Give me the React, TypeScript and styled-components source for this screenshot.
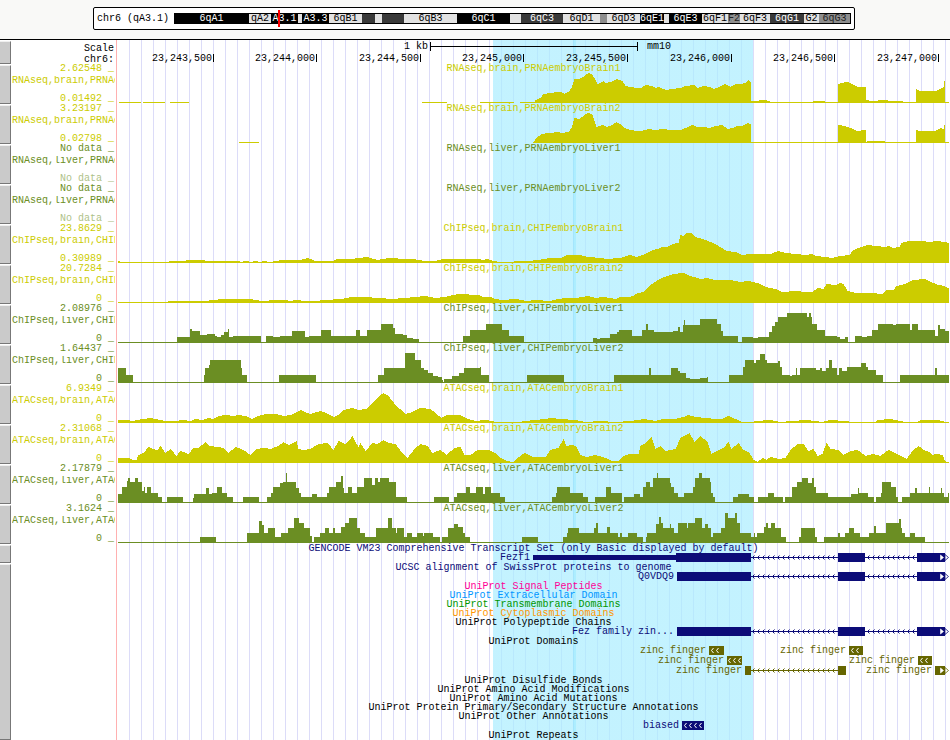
import React from "react";
import styled, { createGlobalStyle } from "styled-components";

const YELLOW = "#cccc00";
const GREEN = "#6b8e23";
const NAVY = "#0c0c78";
const OLIVE = "#666600";

const GlobalStyle = createGlobalStyle`
  * { box-sizing: border-box; }
  body {
    margin: 0;
    background: #fff;
    color: #000;
    font-family: "Liberation Mono", "Courier New", monospace;
    font-size: 10px;
    line-height: 9px;
  }
`;

/* The drawing area spans these horizontal units; everything in it scales with the window. */
const VIEW_START = 117;
const VIEW_WIDTH = 833;
const pct = (x: number) => `${((x - VIEW_START) / VIEW_WIDTH) * 100}%`;
const span = (a: number, b: number) => `${((b - a) / VIEW_WIDTH) * 100}%`;

/* ---------- chromosome ideogram ---------- */

const Header = styled.header`
  height: 40px;
  padding: 7px 95px 0 93px;
  background: #f9f9f7;
  border-bottom: 1px solid #000;
`;

const Ideogram = styled.div`
  display: flex;
  align-items: center;
  gap: 5px;
  height: 23px;
  padding: 0 3px;
  background: #fff;
  border: 1px solid #000;
  border-radius: 2px;
`;

const Position = styled.span`
  flex: none;
  white-space: pre;
`;

const Bands = styled.div`
  position: relative;
  flex: 1;
  display: flex;
  height: 11px;
  border: solid #000;
  border-width: 1px 1px 1px 0;
`;

const Band = styled.span<{ $size: number; $fill: string; $ink: string }>`
  flex: ${(p) => p.$size} 1 0;
  min-width: 0;
  display: flex;
  justify-content: center;
  background: ${(p) => p.$fill};
  color: ${(p) => p.$ink};
  white-space: nowrap;
`;

const Marker = styled.span`
  position: absolute;
  top: -4px;
  bottom: -4px;
  left: 15.4%;
  width: 2px;
  background: #f00;
`;

const SHADES: Record<string, [string, string]> = {
  k: ["#000", "#fff"],
  d: ["#393939", "#fff"],
  g: ["#8e8e8e", "#222"],
  l: ["#e2e2e2", "#000"],
};

const BANDS: [number, string, string][] = [
  [75, "k", "6qA1"], [22, "l", "qA2"], [27, "k", "A3.1"], [4, "l", ""],
  [27, "k", "A3.3"], [33, "l", "6qB1"], [13, "d", ""], [7, "l", ""],
  [22, "d", ""], [53, "l", "6qB3"], [53, "k", "6qC1"], [11, "l", ""],
  [42, "d", "6qC3"], [37, "l", "6qD1"], [7, "g", ""], [33, "l", "6qD3"],
  [24, "k", "6qE1"], [5, "l", ""], [33, "k", "6qE3"], [26, "l", "6qF1"],
  [12, "g", "F2"], [30, "l", "6qF3"], [34, "d", "6qG1"], [15, "l", "G2"],
  [31, "g", "6qG3"],
];

/* ---------- track layout ---------- */

const Track = styled.section`
  display: grid;
  grid-template-columns: 11px 106px minmax(0, 1fr);
`;

const Handle = styled.button`
  margin: 1px 0 0;
  padding: 0;
  background: #cacaca;
  border: solid;
  border-width: 1px 1px 1px 0;
  border-color: #efefef #777 #777 #efefef;
  border-radius: 0;
  cursor: ew-resize;
`;

const Labels = styled.div<{ $color?: string }>`
  display: flex;
  flex-direction: column;
  min-width: 0;
  padding-right: 3px;
  color: ${(p) => p.$color ?? "#000"};
  text-align: right;
  white-space: pre;
`;

const RulerLabels = styled(Labels)`
  height: 24px;
  padding-top: 3px;
  line-height: 11px;
`;

const TrackName = styled.span`
  margin: 3px -1px 9px 1px;
  overflow: hidden;
  text-align: left;
`;

const Limit = styled.span<{ $faint?: boolean }>`
  opacity: ${(p) => (p.$faint ? 0.55 : 1)};
`;

const Plot = styled.div`
  min-width: 0;
  box-shadow: -1px 0 0 #ffb0b0;
  background-image:
    linear-gradient(#fff, #fff),
    linear-gradient(
      to right,
      transparent 45.14%,
      rgba(170, 237, 255, 0.7) 45.14%,
      rgba(170, 237, 255, 0.7) 54.8%,
      rgba(145, 232, 255, 0.75) 54.8%,
      rgba(145, 232, 255, 0.75) 55.1%,
      rgba(170, 237, 255, 0.7) 55.1%,
      rgba(170, 237, 255, 0.7) 76.35%,
      transparent 76.35%
    ),
    repeating-linear-gradient(to right, #dcdcf8 0 1px, transparent 1px 12px);
  background-size: 1px 100%, auto, auto;
  background-repeat: no-repeat, no-repeat, repeat;
`;

const Title = styled.h2<{ $color?: string }>`
  margin: 0;
  height: 9px;
  font-size: 10px;
  font-weight: 400;
  text-align: center;
  white-space: nowrap;
  color: ${(p) => p.$color ?? "#000"};
`;

const Canvas = styled.svg<{ $height: number; $after?: number }>`
  display: block;
  width: 100%;
  height: ${(p) => p.$height}px;
  margin-bottom: ${(p) => p.$after ?? 0}px;
  shape-rendering: crispEdges;
`;

/* ---------- signal graphs ---------- */

type Signal = {
  name: string;
  title: string;
  color: string;
  max: string;
  min: string;
  step?: boolean;
  extra?: [number, number][];
  data?: string;
};

/* Each entry of the data is position:height; smooth graphs are interpolated, stepped ones hold. */
function areaPath(data: string, step?: boolean) {
  const pts = data.trim().split(/\s+/).map((p) => p.split(":").map(Number));
  let d = `M${pts[0][0]} 30`;
  let i = 0;
  for (let x = pts[0][0]; x < 949; x++) {
    while (i < pts.length - 1 && pts[i + 1][0] <= x) i++;
    const [x0, h0] = pts[i];
    const next = pts[i + 1];
    const h = step || !next ? h0 : Math.round(h0 + ((next[1] - h0) * (x - x0)) / (next[0] - x0));
    d += `V${30 - h}H${x + 1}`;
  }
  return d + "V30Z";
}

const SIGNALS: Signal[] = [
  {
    name: "RNAseq,brain,PRNAembryoBrain1", title: "RNAseq,brain,PRNAembryoBrain1", color: YELLOW, max: "2.62548", min: "0.01492",
    extra: [[119, 141], [143, 165], [170, 189], [422, 447], [480, 514], [520, 534]],
    data: `534:1 535:3 540:5 543:9 550:10 558:11 561:11 564:9 568:11 571:15 574:24 579:24 584:27 588:30 591:29 595:23 597:19 600:20 603:22 605:20 611:21 616:24 622:22 625:17 630:16 636:15 641:15 645:18 651:17 655:15 658:16 660:15 666:13 671:14 680:15 685:17 694:18 697:15 703:17 709:16 713:14 719:16 724:19 730:16 735:19 740:19 745:20 748:23 750:21 751:2 757:2 760:3 765:3 768:2 771:1 812:1 813:2 824:2 825:1 837:1 838:19 841:20 847:21 851:19 858:16 865:16 866:3 870:2 885:3 890:2 900:2 905:1 915:1 916:14 919:12 935:12 940:14 943:16 944:22 945:1 949:1`,
  },
  {
    name: "RNAseq,brain,PRNAembryoBrain2", title: "RNAseq,brain,PRNAembryoBrain2", color: YELLOW, max: "3.23197", min: "0.02798",
    extra: [[239, 259]],
    data: `533:1 536:5 541:9 549:10 558:11 561:10 568:11 571:15 574:25 579:24 584:28 588:30 592:28 596:16 602:18 606:16 612:18 616:21 621:18 624:15 630:13 637:12 641:12 648:14 655:13 663:14 670:13 680:13 685:15 692:18 697:16 703:16 709:15 715:17 722:18 727:14 732:15 737:17 742:17 747:20 750:19 751:1 837:1 838:18 844:17 850:15 856:12 865:13 866:1 868:2 884:2 885:1 915:1 916:13 919:12 935:12 940:15 943:14 944:18 945:1 949:1`,
  },
  { name: "RNAseq,liver,PRNAembryoLiver1", title: "RNAseq,liver,PRNAembryoLiver1", color: GREEN, max: "No data", min: "No data" },
  { name: "RNAseq,liver,PRNAembryoLiver2", title: "RNAseq,liver,PRNAembryoLiver2", color: GREEN, max: "No data", min: "No data" },
  {
    name: "ChIPseq,brain,CHIPembryoBrain1", title: "ChIPseq,brain,CHIPembryoBrain1", color: YELLOW, max: "23.8629", min: "0.30989",
    data: `118:2 121:1 168:1 169:2 203:3 206:2 239:2 240:1 246:2 250:1 255:2 260:1 264:2 269:1 276:2 282:3 300:3 307:5 310:4 315:2 333:2 337:4 345:4 350:4 367:6 373:4 378:3 382:4 389:5 405:4 413:4 424:2 435:2 442:4 455:4 468:4 478:4 483:3 487:4 493:2 500:1 528:2 537:3 550:5 560:5 567:8 580:8 587:6 602:5 605:4 620:5 626:7 630:8 636:6 645:9 652:13 657:14 662:16 667:16 672:19 678:20 680:28 683:27 686:30 691:30 695:26 702:24 710:21 718:17 726:12 735:11 742:8 750:9 770:9 778:12 785:10 795:9 805:8 812:9 815:7 825:6 832:5 840:7 849:8 853:13 858:15 867:18 875:17 886:16 888:17 893:15 899:16 901:20 908:22 920:22 930:21 935:22 945:21 949:19`,
  },
  {
    name: "ChIPseq,brain,CHIPembryoBrain2", title: "ChIPseq,brain,CHIPembryoBrain2", color: YELLOW, max: "20.7284", min: "0",
    data: `118:1 167:1 168:2 205:2 213:3 222:4 250:4 255:3 262:2 275:3 285:3 289:2 296:3 305:2 315:2 325:3 340:4 348:5 350:6 370:6 372:5 380:5 390:4 405:5 415:6 425:7 435:5 445:6 453:8 459:9 478:8 482:6 490:6 494:4 503:3 515:4 521:3 526:2 535:3 550:2 558:4 565:5 575:5 588:7 595:5 602:6 610:5 615:4 620:6 629:6 633:7 635:9 643:11 650:18 659:24 667:27 673:29 683:30 690:27 700:24 707:25 714:23 730:23 740:21 748:22 757:20 765:16 775:14 782:11 795:12 805:11 812:11 817:15 823:14 826:19 835:18 840:20 843:19 847:12 855:10 870:10 882:9 886:13 893:13 896:17 905:19 912:23 925:24 930:21 938:18 944:17 949:14`,
  },
  {
    name: "ChIPseq,liver,CHIPembryoLiver1", title: "ChIPseq,liver,CHIPembryoLiver1", color: GREEN, max: "2.08976", min: "0", step: true,
    data: `118:1 177:6 190:14 192:12 200:8 207:9 215:7 217:6 221:8 224:11 228:14 229:6 233:7 261:1 266:7 273:6 280:7 292:12 305:6 309:7 321:13 331:7 356:13 360:7 367:13 381:19 393:15 395:9 403:8 407:5 413:4 419:1 463:7 470:13 486:19 502:13 509:7 524:1 593:5 597:4 600:5 610:9 617:11 619:13 632:7 642:13 646:19 648:13 654:11 673:12 678:16 680:11 683:18 684:23 685:18 700:24 717:19 721:12 723:7 738:1 742:6 753:5 758:6 769:11 772:17 775:21 778:26 787:30 807:26 809:30 811:26 812:19 817:13 825:7 837:6 840:4 845:6 848:1 855:7 862:6 867:7 872:13 878:19 893:18 896:19 910:13 912:19 918:13 935:7 938:18 940:14 945:12`,
  },
  {
    name: "ChIPseq,liver,CHIPembryoLiver2", title: "ChIPseq,liver,CHIPembryoLiver2", color: GREEN, max: "1.64437", min: "0", step: true,
    data: `118:15 126:8 133:1 204:8 205:15 209:18 210:23 241:15 242:8 247:1 279:8 316:1 378:8 384:15 405:30 415:23 421:15 424:13 428:10 433:7 438:6 442:3 443:1 444:4 452:7 459:10 464:15 480:16 481:8 489:1 527:8 564:1 614:8 649:15 651:8 671:15 678:12 680:10 686:5 690:4 700:5 707:6 708:1 729:8 743:16 745:23 754:20 756:23 760:29 765:23 767:20 778:22 780:16 782:8 790:7 792:8 796:15 797:8 800:15 816:13 820:15 822:12 826:15 829:23 832:15 837:8 839:15 842:12 847:16 861:20 866:16 868:13 876:8 883:1 900:8 935:15 937:8`,
  },
  {
    name: "ATACseq,brain,ATACembryoBrain1", title: "ATACseq,brain,ATACembryoBrain1", color: YELLOW, max: "6.9349", min: "0",
    data: `118:3 125:3 133:2 137:3 143:4 150:5 155:4 160:3 165:2 175:2 183:3 190:2 195:4 202:3 208:5 213:4 218:7 226:8 233:7 238:8 245:7 252:4 258:7 266:9 275:9 283:7 290:8 297:11 301:13 306:10 310:9 320:12 326:10 333:6 338:8 343:13 352:15 358:13 366:14 372:20 380:28 383:30 388:27 395:18 405:9 412:11 420:15 430:14 436:9 441:5 446:8 460:8 467:4 475:2 485:3 492:2 494:1 520:1 524:2 535:3 545:4 550:5 560:4 575:3 585:1 600:2 615:1 630:2 638:3 643:4 655:2 663:4 675:4 683:6 688:8 695:6 705:5 715:4 722:4 728:7 735:4 742:1 753:1 755:2 770:3 780:1 792:2 805:3 815:2 822:1 830:3 845:2 852:1 875:1 877:3 890:4 900:2 905:1 917:1 920:3 938:3 945:1 949:1`,
  },
  {
    name: "ATACseq,brain,ATACembryoBrain2", title: "ATACseq,brain,ATACembryoBrain2", color: YELLOW, max: "2.31068", min: "0",
    data: `118:5 128:5 132:3 136:3 138:8 143:10 148:16 152:14 157:13 160:17 165:10 170:14 176:7 180:12 188:9 193:15 198:15 205:21 209:17 218:16 223:15 228:10 235:16 243:13 250:8 256:14 264:15 270:14 278:17 283:21 288:18 293:20 296:22 298:14 303:13 310:14 318:19 327:20 333:13 338:22 345:19 350:24 352:27 355:21 358:16 360:20 365:12 372:20 377:19 383:23 388:20 395:19 401:11 407:5 414:14 420:19 427:17 432:10 440:13 446:8 454:15 460:16 464:8 470:8 477:13 488:13 495:10 500:5 506:2 513:1 517:5 524:10 532:6 545:6 550:13 558:15 563:24 566:17 572:18 576:16 580:8 586:6 595:8 605:5 612:2 618:2 623:7 629:9 638:9 640:17 645:20 651:26 655:14 660:17 665:12 675:14 680:25 689:30 694:21 700:27 707:21 711:9 718:13 723:15 728:21 731:14 738:20 743:13 749:10 753:3 757:1 762:5 766:3 770:6 778:4 785:5 790:13 797:19 803:19 808:12 813:14 817:7 822:9 826:20 830:14 838:13 843:8 850:12 857:13 865:7 873:9 880:7 888:13 895:10 900:7 906:4 912:12 918:17 925:12 929:11 932:8 936:9 942:8 944:3 946:1 949:1`,
  },
  {
    name: "ATACseq,liver,ATACembryoLiver1", title: "ATACseq,liver,ATACembryoLiver1", color: GREEN, max: "2.17879", min: "0", step: true,
    data: `118:9 122:16 127:22 128:25 130:21 135:25 138:21 142:12 144:16 145:10 147:16 151:10 158:6 162:1 167:6 183:1 193:5 194:9 206:15 209:9 212:10 217:16 222:10 227:6 233:1 243:6 259:1 267:6 271:10 273:16 280:20 283:21 286:30 287:21 296:15 299:10 301:6 312:9 317:6 327:10 329:16 336:21 341:27 343:15 344:10 348:16 352:10 357:16 364:25 372:18 375:25 378:21 380:25 389:21 396:6 407:1 434:6 449:1 454:6 457:10 466:16 470:10 476:16 483:9 485:16 491:10 500:6 505:1 552:6 556:10 557:16 570:10 583:6 588:1 595:6 606:16 611:10 622:1 624:6 634:9 640:6 643:16 646:21 650:16 653:25 657:30 658:25 670:20 671:16 674:10 678:6 684:10 693:16 695:25 699:30 702:25 710:21 711:10 713:6 715:1 733:6 738:9 749:6 754:1 758:6 768:10 774:6 783:1 785:6 792:16 797:21 802:25 808:20 812:25 814:16 816:10 828:6 851:9 858:15 859:10 868:6 874:1 876:6 881:10 882:21 891:16 896:6 898:1 902:6 910:10 915:15 917:10 929:16 930:10 941:15 942:10 944:6 948:10`,
  },
  {
    name: "ATACseq,liver,ATACembryoLiver2", title: "ATACseq,liver,ATACembryoLiver2", color: GREEN, max: "3.1624", min: "0", step: true,
    data: `118:1 200:6 216:1 247:10 259:22 262:18 264:10 268:15 275:6 281:10 288:15 294:25 299:20 304:15 310:7 312:1 314:6 320:10 325:15 329:10 333:15 335:10 341:16 345:20 349:25 357:15 360:10 365:6 376:15 388:25 392:15 396:10 397:15 404:6 407:10 412:6 417:10 423:7 424:10 433:6 440:1 442:6 448:15 454:19 458:16 463:10 465:6 470:1 522:6 538:1 563:6 567:10 568:15 579:10 594:15 596:20 598:10 607:16 610:10 618:6 620:10 622:6 628:10 637:6 643:1 646:6 647:10 656:19 659:26 661:20 663:15 670:19 671:15 674:10 678:20 687:15 688:20 695:25 702:15 705:19 708:15 711:6 713:10 721:15 725:30 728:25 735:30 737:20 740:10 751:6 754:10 755:6 757:10 764:16 766:20 768:15 771:20 775:15 781:6 786:1 799:6 801:15 814:15 815:6 817:1 824:6 838:10 840:6 845:10 849:15 854:10 860:6 869:10 874:17 876:10 886:20 899:24 901:15 902:10 905:6 910:10 915:6 925:1`,
  },
];

function SignalTrack({ s }: { s: Signal }) {
  return (
    <Track>
      <Handle type="button" aria-label={`Configure ${s.title}`} />
      <Labels $color={s.color}>
        <Limit>{s.max + " _"}</Limit>
        <TrackName>{s.name}</TrackName>
        <Limit $faint={s.min === "No data"}>{s.min + " _"}</Limit>
      </Labels>
      <Plot>
        <Title $color={s.color}>{s.title}</Title>
        <Canvas $height={30} $after={1} viewBox={`${VIEW_START} 0 ${VIEW_WIDTH} 30`} preserveAspectRatio="none" fill={s.color}>
          {s.extra?.map(([a, b]) => <rect key={a} x={a} y={29} width={b - a} height={1} />)}
          {s.data && <path d={areaPath(s.data, s.step)} />}
        </Canvas>
      </Plot>
    </Track>
  );
}

/* ---------- ruler ---------- */

const TICKS: [number, string][] = [
  [213, "23,243,500"], [316, "23,244,000"], [420, "23,244,500"], [523, "23,245,000"],
  [627, "23,245,500"], [731, "23,246,000"], [834, "23,246,500"], [938, "23,247,000"],
];

const RulerText = styled.text`
  fill: #000;
  text-anchor: end;
  white-space: pre;
`;

function Ruler() {
  return (
    <Track>
      <Handle type="button" aria-label="Configure ruler" />
      <RulerLabels>
        <span>Scale</span>
        <span>chr6:</span>
      </RulerLabels>
      <Plot>
        <Canvas $height={24}>
          <RulerText x={pct(428)} y={9}>1 kb</RulerText>
          <rect x={pct(430)} y={2} width={1} height={9} />
          <rect x={pct(430)} y={6} width={span(430, 637)} height={1} />
          <rect x={pct(637)} y={2} width={1} height={9} />
          <RulerText x={pct(671)} y={9}>mm10</RulerText>
          {TICKS.map(([x, label]) => (
            <React.Fragment key={label}>
              <RulerText x={pct(x - 1)} y={21}>{label}</RulerText>
              <rect x={pct(x)} y={14} width={1} height={8} />
            </React.Fragment>
          ))}
        </Canvas>
      </Plot>
    </Track>
  );
}

/* ---------- annotation features ---------- */

type Block = { a: number; b: number; thin?: boolean; marks?: number };
type Feature = { label?: string; blocks: Block[]; continues?: boolean };

const FeatureLabel = styled.text`
  text-anchor: end;
  white-space: pre;
`;

function Chevron({ x }: { x: number }) {
  return <path d={`M${x + 2.5} 2L${x + 0.5} 4.5L${x + 2.5} 7`} fill="none" stroke="#fff" strokeWidth={1} shapeRendering="auto" />;
}

function FeatureRow({ id, color, items, gap = 1 }: { id: string; color: string; items: Feature[]; gap?: number }) {
  return (
    <Canvas $height={9} $after={gap} fill={color} overflow="visible">
      <defs>
        <pattern id={id} width={5} height={9} patternUnits="userSpaceOnUse">
          <rect x={0} y={4} width={5} height={1} />
          <rect x={1} y={3} width={1} height={3} />
          <rect x={2} y={2} width={1} height={1} opacity={0.5} />
          <rect x={2} y={6} width={1} height={1} opacity={0.5} />
        </pattern>
      </defs>
      {items.map((f) => {
        const first = f.blocks[0];
        return (
          <g key={first.a}>
            {f.label && <FeatureLabel x={pct(first.a - 3)} y={7}>{f.label}</FeatureLabel>}
            {f.blocks.map((bl, i) => {
              const next = f.blocks[i + 1];
              return (
                <g key={bl.a}>
                  <rect x={pct(bl.a)} y={bl.thin ? 2 : 0} width={span(bl.a, bl.b)} height={bl.thin ? 5 : 9} />
                  {next && next.a > bl.b && (
                    <rect x={pct(bl.b)} y={0} width={span(bl.b, next.a)} height={9} fill={`url(#${id})`} />
                  )}
                  {bl.marks && (
                    <svg x={pct(bl.a)} width={bl.b - bl.a} height={9}>
                      {Array.from({ length: bl.marks }, (_, m) => <Chevron key={m} x={(bl.marks === 3 ? 1 : 2) + m * 5} />)}
                    </svg>
                  )}
                </g>
              );
            })}
            {f.continues && (
              <svg x={pct(939)} width={11} height={9} shapeRendering="auto">
                <path d="M1.5 2L4.5 4.5L1.5 7Z" fill="#fff" stroke="#fff" strokeWidth={0.6} />
                <path d="M6 1.5L9.5 4.5L6 7.5Z" fill="#fff" stroke={color} strokeWidth={0.8} />
              </svg>
            )}
          </g>
        );
      })}
    </Canvas>
  );
}

const TAIL: Block[] = [{ a: 838, b: 865 }, { a: 917, b: 945 }];

function AnnotationTracks() {
  return (
    <>
      <Track>
        <Handle type="button" aria-label="Configure GENCODE VM23" />
        <Labels />
        <Plot>
          <Title $color={NAVY}>GENCODE VM23 Comprehensive Transcript Set (only Basic displayed by default)</Title>
          <FeatureRow id="gencode" color={NAVY} items={[
            { label: "Fezf1", continues: true, blocks: [{ a: 533, b: 676, thin: true }, { a: 676, b: 751 }, ...TAIL] },
          ]} />
        </Plot>
      </Track>
      <Track>
        <Handle type="button" aria-label="Configure UniProt" />
        <Labels />
        <Plot>
          <Title $color={NAVY}>UCSC alignment of SwissProt proteins to genome</Title>
          <FeatureRow id="swissprot" color={NAVY} items={[
            { label: "Q0VDQ9", continues: true, blocks: [{ a: 677, b: 751 }, ...TAIL] },
          ]} />
          <Title $color="#ff0096">UniProt Signal Peptides</Title>
          <Title $color="#0096ff">UniProt Extracellular Domain</Title>
          <Title $color="#009600">UniProt Transmembrane Domains</Title>
          <Title $color="#ff9600">UniProt Cytoplasmic Domains</Title>
          <Title>UniProt Polypeptide Chains</Title>
          <FeatureRow id="chains" color={NAVY} items={[
            { label: "Fez family zin...", continues: true, blocks: [{ a: 677, b: 751 }, ...TAIL] },
          ]} />
          <Title>UniProt Domains</Title>
          <FeatureRow id="domains1" color={OLIVE} items={[
            { label: "zinc finger", blocks: [{ a: 709, b: 724, marks: 2 }] },
            { label: "zinc finger", blocks: [{ a: 849, b: 863, marks: 2 }] },
          ]} />
          <FeatureRow id="domains2" color={OLIVE} items={[
            { label: "zinc finger", blocks: [{ a: 727, b: 742, marks: 3 }] },
            { label: "zinc finger", blocks: [{ a: 918, b: 932, marks: 2 }] },
          ]} />
          <FeatureRow id="domains3" color={OLIVE} items={[
            { label: "zinc finger", blocks: [{ a: 745, b: 751 }, { a: 838, b: 846 }] },
            { label: "zinc finger", continues: true, blocks: [{ a: 935, b: 945 }] },
          ]} />
          <Title>UniProt Disulfide Bonds</Title>
          <Title>UniProt Amino Acid Modifications</Title>
          <Title>UniProt Amino Acid Mutations</Title>
          <Title>UniProt Protein Primary/Secondary Structure Annotations</Title>
          <Title>UniProt Other Annotations</Title>
          <FeatureRow id="other" color={NAVY} items={[
            { label: "biased", blocks: [{ a: 682, b: 704, marks: 4 }] },
          ]} />
          <Title>UniProt Repeats</Title>
        </Plot>
      </Track>
    </>
  );
}

export default function App() {
  return (
    <>
      <GlobalStyle />
      <Header>
        <Ideogram>
          <Position>chr6 (qA3.1)</Position>
          <Bands>
            {BANDS.map(([size, shade, label], i) => (
              <Band key={i} $size={size} $fill={SHADES[shade][0]} $ink={SHADES[shade][1]}>{label}</Band>
            ))}
            <Marker />
          </Bands>
        </Ideogram>
      </Header>
      <main>
        <Ruler />
        {SIGNALS.map((s) => <SignalTrack key={s.title} s={s} />)}
        <AnnotationTracks />
      </main>
    </>
  );
}
